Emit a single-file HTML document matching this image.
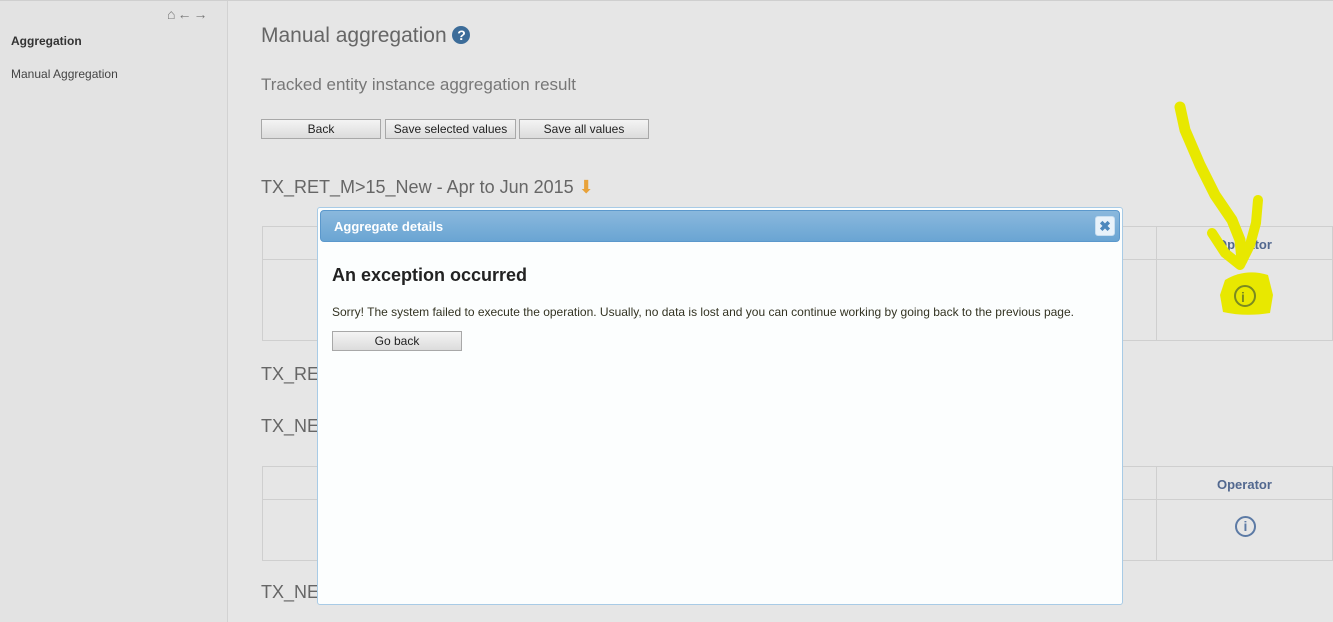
<!DOCTYPE html>
<html><head><meta charset="utf-8"><style>
*{margin:0;padding:0;box-sizing:border-box}
body{width:1333px;height:622px;overflow:hidden;background:#e6e6e6;font-family:"Liberation Sans",sans-serif;position:relative}
.abs{position:absolute}
#side{left:0;top:1px;width:228px;height:621px;background:#e3e3e3;border-right:1px solid #d2d2d2}
.btn{position:absolute;height:20px;border:1px solid #a8a8a8;background:linear-gradient(#f4f4f4,#dcdcdc);font-size:12px;color:#222;text-align:center;line-height:18px}
h3{position:absolute;font-weight:normal;font-size:18px;color:#666}
.tbl{position:absolute;left:262px;right:0;border:1px solid #cfcfcf}
.op{position:absolute;font-size:13px;font-weight:bold;color:#52688f}
</style></head><body>
<div class="abs" style="left:0;top:0;width:1333px;height:1px;background:#cfcfcf"></div>
<div class="abs" id="side">
 <div class="abs" style="left:167px;top:5px;font-size:14px;font-weight:bold;color:#777;letter-spacing:2px">⌂←→</div>
 <div class="abs" style="left:11px;top:33px;font-size:12px;font-weight:bold;color:#333">Aggregation</div>
 <div class="abs" style="left:11px;top:66px;font-size:12px;color:#444">Manual Aggregation</div>
</div>
<div class="abs" style="left:261px;top:24px;font-size:21px;color:#666">Manual aggregation <span style="display:inline-block;width:18px;height:18px;border-radius:50%;background:#3c6c99;color:#fff;font-size:14px;font-weight:bold;text-align:center;line-height:18px;vertical-align:2px">?</span></div>
<div class="abs" style="left:261px;top:75px;font-size:17px;color:#777">Tracked entity instance aggregation result</div>
<div class="btn" style="left:261px;top:119px;width:120px">Back</div>
<div class="btn" style="left:385px;top:119px;width:131px">Save selected values</div>
<div class="btn" style="left:519px;top:119px;width:130px">Save all values</div>
<h3 style="left:261px;top:177px">TX_RET_M&gt;15_New - Apr to Jun 2015 <span style="color:#e8a23a">⬇</span></h3>
<div class="tbl" style="top:226px;height:115px"><div class="abs" style="left:0;right:0;top:32px;border-top:1px solid #cfcfcf"></div><div class="abs" style="left:893px;top:0;bottom:0;border-left:1px solid #cfcfcf"></div></div>
<div class="op" style="left:1217px;top:237px">Operator</div>
<h3 style="left:261px;top:364px">TX_RET</h3>
<h3 style="left:261px;top:416px">TX_NE</h3>
<div class="tbl" style="top:466px;height:95px"><div class="abs" style="left:0;right:0;top:32px;border-top:1px solid #cfcfcf"></div><div class="abs" style="left:893px;top:0;bottom:0;border-left:1px solid #cfcfcf"></div></div>
<div class="op" style="left:1217px;top:477px">Operator</div>
<div class="abs" style="left:1235px;top:516px;width:21px;height:21px;border:2px solid #5c7aa5;border-radius:50%;color:#5c7aa5;font-weight:bold;font-size:14px;text-align:center;line-height:17px">i</div>
<h3 style="left:261px;top:582px">TX_NE</h3>
<svg class="abs" style="left:1160px;top:95px" width="130" height="230">
<g fill="none" stroke="#e8e800" stroke-linecap="round" stroke-linejoin="round">
<path d="M20,12 L25,35 L40,70 L55,100 L72,125 L80,145 L82,165" stroke-width="11"/>
<path d="M52,138 L65,158 L80,170 L90,150 L96,128 L98,105" stroke-width="10"/>
</g>
<path d="M65,185 Q85,173 108,180 L113,200 L110,218 Q85,222 63,217 L60,200 Z" fill="#e8e800"/>
<circle cx="85" cy="201" r="10" fill="none" stroke="#7a8a20" stroke-width="2"/><text x="81" y="207" font-size="14" font-weight="bold" fill="#7a8a20">i</text></svg>
<div class="abs" style="left:317px;top:207px;width:806px;height:398px;background:#fcfefe;border:1px solid #a8cbe6;border-radius:3px">
 <div class="abs" style="left:2px;top:2px;right:2px;height:32px;background:linear-gradient(#8ab8dd,#6aa5d3);border:1px solid #5b98cc;border-radius:4px"></div>
 <div class="abs" style="left:16px;top:11px;font-size:13px;font-weight:bold;color:#fff">Aggregate details</div>
 <div class="abs" style="left:777px;top:8px;width:20px;height:20px;border:1px solid #c8def0;border-radius:3px;background:#e8f2fa;color:#4d88bd;font-weight:bold;font-size:14px;text-align:center;line-height:18px">✖</div>
 <div class="abs" style="left:14px;top:57px;font-size:18px;font-weight:bold;color:#222">An exception occurred</div>
 <div class="abs" style="left:14px;top:97px;font-size:12px;color:#332">Sorry! The system failed to execute the operation. Usually, no data is lost and you can continue working by going back to the previous page.</div>
 <div class="btn" style="left:14px;top:123px;width:130px">Go back</div>
</div>
</body></html>
